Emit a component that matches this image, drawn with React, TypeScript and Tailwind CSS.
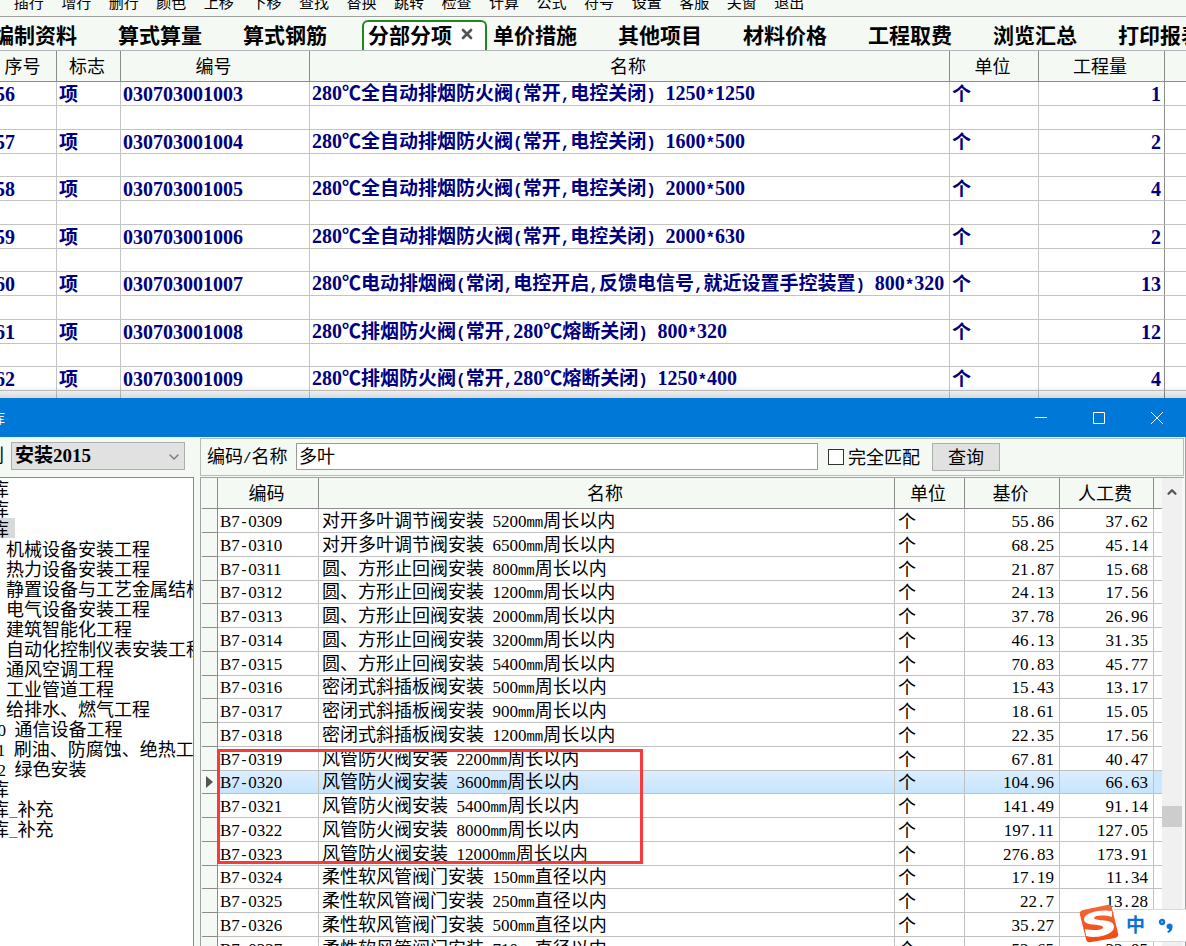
import { Fragment } from 'react'
import { ChevronDown, ChevronUp, X } from 'lucide-react'
import clsx from 'clsx'

const tools = [
  '插行', '增行', '删行', '颜色', '上移', '下移', '查找', '替换', '跳转',
  '检查', '计算', '公式', '符号', '设置', '客服', '关窗', '退出',
]

const tabs = [
  '编制资料', '算式算量', '算式钢筋', '分部分项', '单价措施',
  '其他项目', '材料价格', '工程取费', '浏览汇总', '打印报表',
]

const activeTab = '分部分项'

interface BillItem {
  no: string
  code: string
  name: string
  qty: string
}

const bill: BillItem[] = [
  { no: '56', code: '030703001003', name: '280℃全自动排烟防火阀(常开,电控关闭) 1250*1250', qty: '1' },
  { no: '57', code: '030703001004', name: '280℃全自动排烟防火阀(常开,电控关闭) 1600*500', qty: '2' },
  { no: '58', code: '030703001005', name: '280℃全自动排烟防火阀(常开,电控关闭) 2000*500', qty: '4' },
  { no: '59', code: '030703001006', name: '280℃全自动排烟防火阀(常开,电控关闭) 2000*630', qty: '2' },
  { no: '60', code: '030703001007', name: '280℃电动排烟阀(常闭,电控开启,反馈电信号,就近设置手控装置) 800*320', qty: '13' },
  { no: '61', code: '030703001008', name: '280℃排烟防火阀(常开,280℃熔断关闭) 800*320', qty: '12' },
  { no: '62', code: '030703001009', name: '280℃排烟防火阀(常开,280℃熔断关闭) 1250*400', qty: '4' },
]

const tree = [
  { text: '库', root: true },
  { text: '库', root: true },
  { text: '库', root: true, selected: true },
  { text: '1 机械设备安装工程' },
  { text: '2 热力设备安装工程' },
  { text: '3 静置设备与工艺金属结构' },
  { text: '4 电气设备安装工程' },
  { text: '5 建筑智能化工程' },
  { text: '6 自动化控制仪表安装工程' },
  { text: '7 通风空调工程' },
  { text: '8 工业管道工程' },
  { text: '9 给排水、燃气工程' },
  { text: '10 通信设备工程' },
  { text: '11 刷油、防腐蚀、绝热工程' },
  { text: '12 绿色安装' },
  { text: '库', root: true },
  { text: '库_补充', root: true },
  { text: '库_补充', root: true },
]

const quotas = [
  ['B7-0309', '对开多叶调节阀安装 5200mm周长以内', '55.86', '37.62'],
  ['B7-0310', '对开多叶调节阀安装 6500mm周长以内', '68.25', '45.14'],
  ['B7-0311', '圆、方形止回阀安装 800mm周长以内', '21.87', '15.68'],
  ['B7-0312', '圆、方形止回阀安装 1200mm周长以内', '24.13', '17.56'],
  ['B7-0313', '圆、方形止回阀安装 2000mm周长以内', '37.78', '26.96'],
  ['B7-0314', '圆、方形止回阀安装 3200mm周长以内', '46.13', '31.35'],
  ['B7-0315', '圆、方形止回阀安装 5400mm周长以内', '70.83', '45.77'],
  ['B7-0316', '密闭式斜插板阀安装 500mm周长以内', '15.43', '13.17'],
  ['B7-0317', '密闭式斜插板阀安装 900mm周长以内', '18.61', '15.05'],
  ['B7-0318', '密闭式斜插板阀安装 1200mm周长以内', '22.35', '17.56'],
  ['B7-0319', '风管防火阀安装 2200mm周长以内', '67.81', '40.47'],
  ['B7-0320', '风管防火阀安装 3600mm周长以内', '104.96', '66.63'],
  ['B7-0321', '风管防火阀安装 5400mm周长以内', '141.49', '91.14'],
  ['B7-0322', '风管防火阀安装 8000mm周长以内', '197.11', '127.05'],
  ['B7-0323', '风管防火阀安装 12000mm周长以内', '276.83', '173.91'],
  ['B7-0324', '柔性软风管阀门安装 150mm直径以内', '17.19', '11.34'],
  ['B7-0325', '柔性软风管阀门安装 250mm直径以内', '22.7', '13.28'],
  ['B7-0326', '柔性软风管阀门安装 500mm直径以内', '35.27', '22.16'],
  ['B7-0327', '柔性软风管阀门安装 710mm直径以内', '52.65', '32.95'],
]

const selectedCode = 'B7-0320'

// Digits and capitals in serif, other half-width characters in mono,
// so that they take half of a Chinese character.
function Mixed({ text, large = false }: { text: string; large?: boolean }) {
  const parts = text.match(/[0-9A-Z]+|[ -/:-@[-~]+|[^ -~]+/g) ?? []
  return (
    <>
      {parts.map((part, i) => {
        if (/^[0-9A-Z]/.test(part)) {
          return (
            <span key={i} className={clsx("font-['Liberation_Serif',serif] leading-none", large ? 'text-[20px]' : 'text-[17px]')}>
              {part}
            </span>
          )
        }
        if (/^[ -~]/.test(part)) {
          return (
            <span key={i} className={clsx("font-['Liberation_Mono',monospace] leading-none", large ? 'text-[16px]' : 'text-[14px]')}>
              {part}
            </span>
          )
        }
        return <Fragment key={i}>{part}</Fragment>
      })}
    </>
  )
}

function Toolbar() {
  return (
    <div className="flex h-[17px] items-end overflow-hidden border-b border-[#a0a0a0] pb-[6px] pl-[5px]">
      <div className="grid w-[808px] grid-cols-[repeat(17,minmax(0,1fr))]">
        {tools.map((tool) => (
          <button key={tool} type="button" className="text-center text-[15px] leading-4">
            {tool}
          </button>
        ))}
      </div>
    </div>
  )
}

function Tabs() {
  return (
    <nav className="flex h-[34px] items-end border-b border-[#b4b4bc]">
      <div className="-ml-[13px] flex">
        {tabs.map((tab) => {
          const active = tab === activeTab
          return (
            <div
              key={tab}
              className={clsx(
                'flex h-[30px] w-[125px] shrink-0 items-center gap-[7px]',
                active ? 'rounded-t-md border-2 border-b-0 border-[#1a8a1a] bg-white pb-1 pl-1' : 'pb-[2px] pl-[6px]',
              )}
            >
              <button type="button" className="whitespace-nowrap text-[21px] font-bold leading-6">
                {tab}
              </button>
              {active && (
                <button type="button" aria-label="关闭">
                  <X className="h-4 w-4 text-[#555]" strokeWidth={4} />
                </button>
              )}
            </div>
          )
        })}
      </div>
    </nav>
  )
}

function BillTable() {
  const th = 'h-[31px] border-b border-r border-[#8c8c8c] p-0 pb-[3px] pr-[3px] text-center text-[18px] font-normal leading-5'
  const td = 'border-b border-r border-[#c4c4c4] p-0 pb-px whitespace-nowrap'
  return (
    <table className="-ml-2 w-[calc(100%+8px)] table-fixed border-separate border-spacing-0">
      <colgroup>
        <col className="w-[65px]" />
        <col className="w-[64px]" />
        <col className="w-[189px]" />
        <col />
        <col className="w-[89px]" />
        <col className="w-[126px]" />
        <col className="w-[21px]" />
      </colgroup>
      <thead>
        <tr>
          <th className={th}>序号</th>
          <th className={th}>标志</th>
          <th className={th}>编号</th>
          <th className={th}>名称</th>
          <th className={th}>单位</th>
          <th className={th}>工程量</th>
          <th className="border-b border-[#8c8c8c]" />
        </tr>
      </thead>
      <tbody className="bg-white text-[19px] font-bold leading-5 text-[#000080]">
        {bill.map((item) => (
          <Fragment key={item.no}>
            <tr className="h-6 nth-[4n]:h-[23px]">
              <td className={clsx(td, 'pl-[3px]')}><Mixed large text={item.no} /></td>
              <td className={clsx(td, 'pl-[2px]')}>项</td>
              <td className={clsx(td, 'pl-[2px]')}><Mixed large text={item.code} /></td>
              <td className={clsx(td, 'pl-[2px]')}><Mixed large text={item.name} /></td>
              <td className={clsx(td, 'pl-[2px]')}>个</td>
              <td className="border-b border-r border-b-[#c4c4c4] border-r-[#8c8c8c] p-0 pb-px pr-[3px] text-right">
                <Mixed large text={item.qty} />
              </td>
              <td className="border-b border-[#c4c4c4]" />
            </tr>
            <tr className="h-6 nth-[4n]:h-[23px]">
              <td className={td} />
              <td className={td} />
              <td className={td} />
              <td className={td} />
              <td className={td} />
              <td className="border-b border-r border-b-[#c4c4c4] border-r-[#8c8c8c]" />
              <td className="border-b border-[#c4c4c4]" />
            </tr>
          </Fragment>
        ))}
      </tbody>
    </table>
  )
}

function TitleBar() {
  return (
    <header className="flex h-[39px] shrink-0 items-stretch justify-between overflow-hidden bg-[#0078d7] text-white">
      <h2 className="-ml-[8px] self-center text-[13px]">库</h2>
      <div className="flex">
        <button type="button" aria-label="最小化" className="flex w-[58px] items-center justify-center">
          <svg width="12" height="12" viewBox="0 0 12 12" stroke="currentColor">
            <path d="M0 5.5h12" />
          </svg>
        </button>
        <button type="button" aria-label="最大化" className="flex w-[58px] items-center justify-center">
          <svg width="12" height="12" viewBox="0 0 12 12" fill="none" stroke="currentColor">
            <path d="M.5.5h11v11H.5z" />
          </svg>
        </button>
        <button type="button" aria-label="关闭" className="flex w-[58px] items-center justify-center">
          <svg width="12" height="12" viewBox="0 0 12 12" stroke="currentColor">
            <path d="M0 0l12 12M12 0L0 12" />
          </svg>
        </button>
      </div>
    </header>
  )
}

function Sidebar() {
  return (
    <aside className="flex w-[194px] shrink-0 flex-col overflow-hidden">
      <div className="flex h-10 items-center pb-[3px]">
        <label htmlFor="kind" className="-ml-[14px] w-[25px] pb-1 text-[18px] leading-5">别</label>
        <div className="relative w-[174px]">
          <select
            id="kind"
            className="block h-7 w-full appearance-none border border-[#adadad] bg-[#e1e1e1] pl-[3px] font-['Liberation_Serif','Noto_Sans_CJK_SC',serif] text-[19px] font-bold leading-6"
          >
            <option>安装2015</option>
          </select>
          <ChevronDown className="pointer-events-none absolute right-[3px] top-[7px] h-4 w-4 text-[#777]" strokeWidth={2} />
        </div>
      </div>
      <ul className="min-h-0 flex-1 overflow-hidden border-r border-t border-[#828790] bg-white">
        {tree.map((node, i) => (
          <li
            key={i}
            className={clsx('flex h-5 whitespace-nowrap text-[18px] leading-5', node.root ? '-ml-[9px]' : '-ml-[11px]')}
          >
            <span className={clsx('whitespace-pre', node.selected && 'bg-[#d9d9d9] pr-[6px]')}>
              <Mixed text={node.text} />
            </span>
          </li>
        ))}
      </ul>
    </aside>
  )
}

function SearchBar() {
  return (
    <form className="flex h-[38px] shrink-0 items-center border border-[#b8bcb8] pl-[6px]">
      <label htmlFor="keyword" className="w-[89px] whitespace-nowrap pb-[3px] text-[18px] leading-5">
        <Mixed text="编码/名称" />
      </label>
      <input
        id="keyword"
        type="text"
        defaultValue="多叶"
        className="mb-px h-[27px] min-w-0 flex-1 border border-[#9a9a9a] bg-white px-[2px] pb-1 text-[18px] leading-5"
      />
      <input id="exact" type="checkbox" className="ml-[10px] h-4 w-4 appearance-none border border-[#333] bg-white" />
      <label htmlFor="exact" className="whitespace-nowrap pb-[3px] pl-1 text-[18px] leading-5">
        完全匹配
      </label>
      <button
        type="button"
        className="ml-3 mr-[183px] h-7 w-[68px] shrink-0 border border-[#adadad] bg-[#e1e1e1] pb-[3px] text-[18px] leading-5"
      >
        查询
      </button>
    </form>
  )
}

function QuotaTable() {
  const th = 'h-[31px] border-b border-r border-[#8c8c8c] p-0 pb-[2px] pr-[3px] text-center text-[18px] font-normal leading-5'
  return (
    <div className="mt-px flex min-h-0 flex-1 overflow-hidden border-l border-t border-[#a0a0a8]">
      <div className="relative min-w-0 flex-1 pl-px">
        <table className="w-full table-fixed border-separate border-spacing-0">
          <colgroup>
            <col className="w-[16px]" />
            <col className="w-[101px]" />
            <col />
            <col className="w-[70px]" />
            <col className="w-[95px]" />
            <col className="w-[94px]" />
            <col className="w-[8px]" />
          </colgroup>
          <thead>
            <tr>
              <th className={th} />
              <th className={th}>编码</th>
              <th className={th}>名称</th>
              <th className={th}>单位</th>
              <th className={th}>基价</th>
              <th className={th}>人工费</th>
              <th className="border-b border-[#8c8c8c]" />
            </tr>
          </thead>
          <tbody className="bg-white text-[18px] leading-[18px]">
            {quotas.map(([code, name, price, labor]) => {
              const selected = code === selectedCode
              const td = clsx(
                'border-b border-r border-[#c0c0c0] p-0 pb-[2px] whitespace-nowrap',
                selected && 'bg-linear-to-b from-[#dceeff] to-[#c6e4fd]',
              )
              return (
                <tr key={code} className="h-6 nth-[4n]:h-[23px]">
                  <td className="border-b border-r border-[#8c8c8c] bg-[#f4f9f4] p-0">
                    {selected && (
                      <svg width="7" height="12" viewBox="0 0 7 12" className="ml-1 block" fill="#555">
                        <path d="M0 0l7 6-7 6z" />
                      </svg>
                    )}
                  </td>
                  <td className={clsx(td, 'pl-[2px]')}><Mixed text={code} /></td>
                  <td className={clsx(td, 'pl-[3px]')}><Mixed text={name} /></td>
                  <td className={clsx(td, 'pl-[3px]')}>个</td>
                  <td className={clsx(td, 'pr-[5px] text-right')}><Mixed text={price} /></td>
                  <td className={clsx(td, 'pr-[5px] text-right')}><Mixed text={labor} /></td>
                  <td className={clsx('border-b border-[#c0c0c0]', selected && 'bg-[#cce8ff]')} />
                </tr>
              )
            })}
          </tbody>
        </table>
        {/* marks the fire damper quotas */}
        <div className="pointer-events-none absolute left-[16px] top-[271px] h-[115px] w-[426px] border-3 border-[#f93a3a]" />
      </div>
      <div className="mr-[2px] flex w-[20px] shrink-0 flex-col items-center bg-[#f0f0f0]">
        <button type="button" aria-label="向上滚动" className="flex h-[28px] items-center">
          <ChevronUp className="h-[14px] w-[14px] text-[#555]" strokeWidth={4} />
        </button>
        <div className="mt-[300px] h-[21px] w-full bg-[#cdcdcd]" />
      </div>
    </div>
  )
}

function InputMethodBar() {
  return (
    <div className="absolute bottom-[4px] right-0 flex h-[33px] w-[72px] items-center border-y border-[#c8dcf2] bg-white pl-[12px] text-[#0a74da]">
      <svg width="40" height="40" viewBox="0 0 40 40" className="absolute -left-[35px] -top-[6px]">
        <defs>
          <linearGradient id="ime" x1="0" y1="0" x2="0" y2="1">
            <stop offset="0" stopColor="#f5673c" />
            <stop offset="1" stopColor="#f04a0e" />
          </linearGradient>
        </defs>
        <path d="M4 6L28 1Q32 0 33 4L39 29Q40 33 36 34L12 38Q8 39 7 35L1 11Q0 7 4 6Z" fill="url(#ime)" />
        <path
          d="M33 7C23 5 5 8 5 15C5 23 21 19 24 23C25 26 16 27 6 25L7 32C20 35 36 30 35 22C34 14 17 18 15 14C16 11 25 11 33 13Z"
          fill="#fff"
        />
      </svg>
      <button type="button" className="pb-[3px] text-[19px] font-bold leading-6">中</button>
      <svg width="16" height="18" viewBox="0 0 16 18" className="ml-[13px]">
        <circle cx="4" cy="5" r="2" fill="none" stroke="currentColor" strokeWidth="2.4" />
        <path d="M8.500 9a3 3 0 1 1 6 1c0 3-1.500 5-4.500 6l-.8-1.500c1.300-.7 2-1.500 2-2.500A2.800 2.800 0 0 1 8.500 9z" fill="currentColor" />
      </svg>
    </div>
  )
}

export default function App() {
  return (
    <main className="relative flex h-screen flex-col overflow-hidden bg-[#f4f9f4] font-['Noto_Sans_CJK_SC',sans-serif] text-black">
      <section className="relative h-[398px] shrink-0 overflow-hidden">
        <Toolbar />
        <Tabs />
        <BillTable />
        <div className="pointer-events-none absolute inset-x-0 bottom-0 h-3 bg-linear-to-b from-transparent to-black/15" />
      </section>
      <section className="flex min-h-0 flex-1 flex-col">
        <TitleBar />
        <div className="flex min-h-0 flex-1">
          <Sidebar />
          <div className="ml-[6px] flex min-w-0 flex-1 flex-col border-r border-[#a0a0a8] pr-px pt-px">
            <SearchBar />
            <QuotaTable />
          </div>
        </div>
      </section>
      <InputMethodBar />
    </main>
  )
}
